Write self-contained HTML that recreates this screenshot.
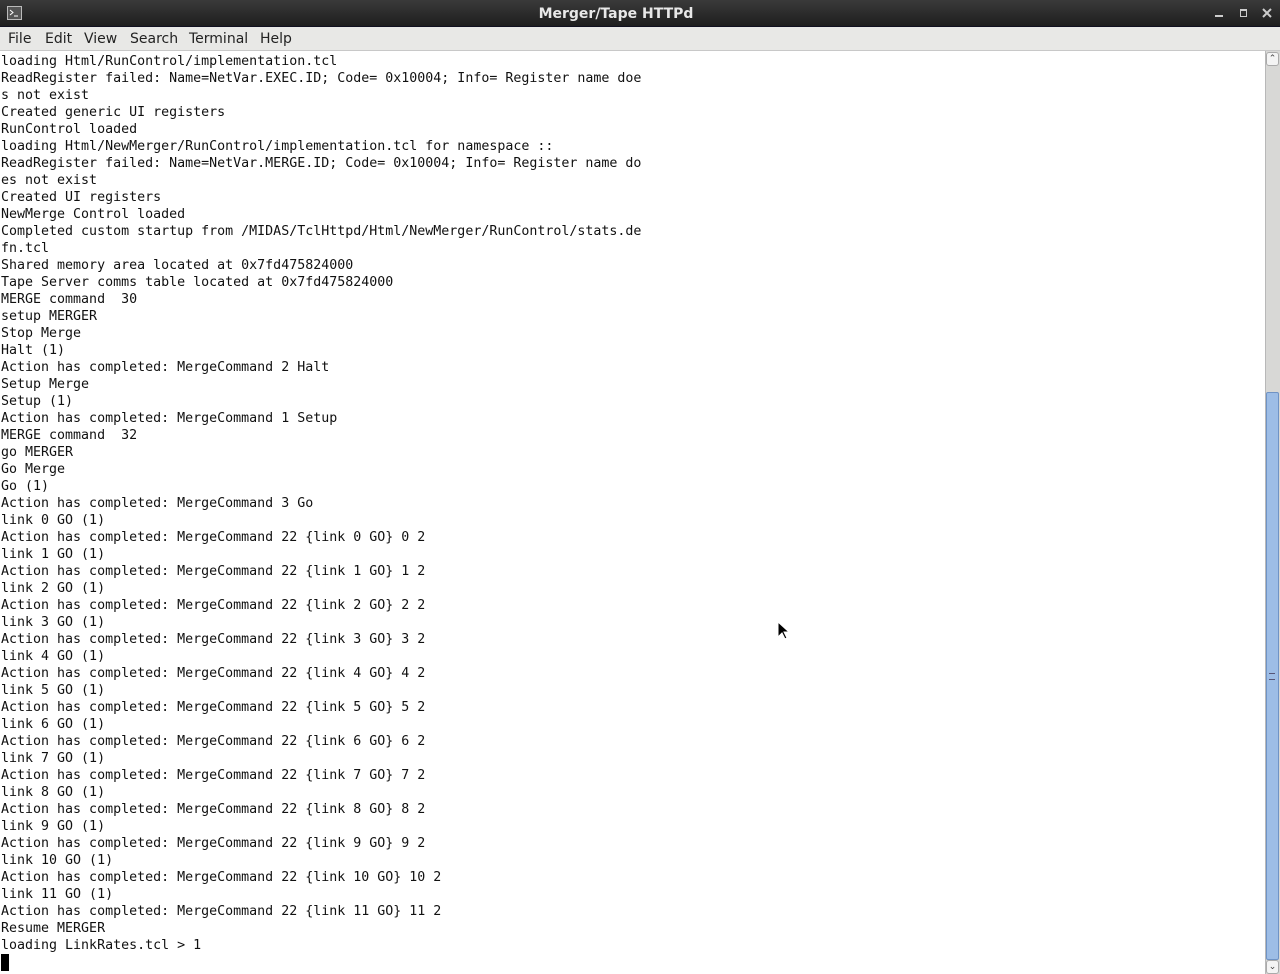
<!DOCTYPE html>
<html><head><meta charset="utf-8"><style>
html,body{margin:0;padding:0;width:1280px;height:974px;overflow:hidden;background:#fff;}
#title{position:absolute;left:0;top:0;width:1280px;height:26px;background:linear-gradient(#3a3a3a,#1e1e1e);border-bottom:1px solid #101020;}
#title .t{position:absolute;left:0;width:1232px;top:6px;text-align:center;color:#e8e8e8;font:bold 14px "DejaVu Sans","Liberation Sans",sans-serif;}
#menu{position:absolute;left:0;top:27px;width:1280px;height:23px;background:#e8e8e6;border-bottom:1px solid #c8c8c8;font:14px "DejaVu Sans","Liberation Sans",sans-serif;color:#222;}
#menu span{position:absolute;top:4px;}
#term{position:absolute;left:1px;top:53px;margin:0;font:13.3px/17px "DejaVu Sans Mono","Liberation Mono",monospace;color:#111;white-space:pre;}
#sb{position:absolute;left:1265px;top:51px;width:15px;height:923px;background:#d8d8d6;border-left:1px solid #b8b8b8;}
#thumb{position:absolute;left:1266px;top:392px;width:13px;height:568px;background:#9dbde6;border:1px solid #6f93c5;box-sizing:border-box;border-radius:2px;}
.arr{position:absolute;left:1266px;width:13px;height:14px;background:#f4f4f4;border:1px solid #aaa;box-sizing:border-box;border-radius:3px;font:9px sans-serif;text-align:center;color:#444;}
#cur{position:absolute;left:1px;top:954px;width:8px;height:17px;background:#000;}
</style></head><body>
<div id="title">
<svg style="position:absolute;left:7px;top:6px" width="15" height="14"><rect x="0.5" y="0.5" width="14" height="13" fill="#555" stroke="#bbb"/><path d="M3 4l3 2.5-3 2.5M7 10h4" stroke="#fff" fill="none"/></svg>
<div class="t">Merger/Tape HTTPd</div>
<div style="position:absolute;left:1215px;top:15px;width:8px;height:2px;background:#ccc"></div>
<div style="position:absolute;left:1240px;top:9px;width:5px;height:5px;border:1px solid #ccc;border-top-width:2px"></div>
<svg style="position:absolute;left:1262px;top:8px" width="10" height="10"><path d="M1 1L9 9M9 1L1 9" stroke="#ccc" stroke-width="2"/></svg>
</div>
<div id="menu"><span style="left:8px">File</span><span style="left:45px">Edit</span><span style="left:84px">View</span><span style="left:130px">Search</span><span style="left:189px">Terminal</span><span style="left:260px">Help</span></div>
<pre id="term">loading Html/RunControl/implementation.tcl
ReadRegister failed: Name=NetVar.EXEC.ID; Code= 0x10004; Info= Register name doe
s not exist
Created generic UI registers
RunControl loaded
loading Html/NewMerger/RunControl/implementation.tcl for namespace ::
ReadRegister failed: Name=NetVar.MERGE.ID; Code= 0x10004; Info= Register name do
es not exist
Created UI registers
NewMerge Control loaded
Completed custom startup from /MIDAS/TclHttpd/Html/NewMerger/RunControl/stats.de
fn.tcl
Shared memory area located at 0x7fd475824000
Tape Server comms table located at 0x7fd475824000
MERGE command  30
setup MERGER
Stop Merge
Halt (1)
Action has completed: MergeCommand 2 Halt
Setup Merge
Setup (1)
Action has completed: MergeCommand 1 Setup
MERGE command  32
go MERGER
Go Merge
Go (1)
Action has completed: MergeCommand 3 Go
link 0 GO (1)
Action has completed: MergeCommand 22 {link 0 GO} 0 2
link 1 GO (1)
Action has completed: MergeCommand 22 {link 1 GO} 1 2
link 2 GO (1)
Action has completed: MergeCommand 22 {link 2 GO} 2 2
link 3 GO (1)
Action has completed: MergeCommand 22 {link 3 GO} 3 2
link 4 GO (1)
Action has completed: MergeCommand 22 {link 4 GO} 4 2
link 5 GO (1)
Action has completed: MergeCommand 22 {link 5 GO} 5 2
link 6 GO (1)
Action has completed: MergeCommand 22 {link 6 GO} 6 2
link 7 GO (1)
Action has completed: MergeCommand 22 {link 7 GO} 7 2
link 8 GO (1)
Action has completed: MergeCommand 22 {link 8 GO} 8 2
link 9 GO (1)
Action has completed: MergeCommand 22 {link 9 GO} 9 2
link 10 GO (1)
Action has completed: MergeCommand 22 {link 10 GO} 10 2
link 11 GO (1)
Action has completed: MergeCommand 22 {link 11 GO} 11 2
Resume MERGER
loading LinkRates.tcl &gt; 1</pre>
<div id="cur"></div>
<div id="sb"></div>
<div class="arr" style="top:52px">&#8963;</div>
<div id="thumb"></div>
<div style="position:absolute;left:1269px;top:673px;width:6px;height:5px;border-top:1px solid #557;border-bottom:1px solid #557"></div>
<div class="arr" style="top:960px">&#8964;</div>
<svg style="position:absolute;left:777px;top:621px" width="12" height="20"><path d="M1 1v15l4-4 3 6 2-1-3-6h5z" fill="#000" stroke="#fff" stroke-width="1"/></svg>
</body></html>
